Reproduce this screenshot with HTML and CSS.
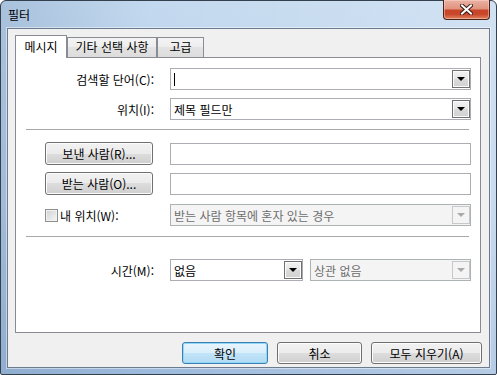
FILE: index.html
```html
<!DOCTYPE html>
<html lang="ko">
<head>
    <meta charset="UTF-8">
    <title>필터</title>
    <link rel="stylesheet" href="styles.css">
</head>
<body>
<div class="window">
    <div class="titlebar">
        <span class="title">필터</span>
        <div class="close">
            <svg width="13" height="11" viewBox="0 0 13 11">
                <path d="M2 1.5 L11 9.5 M11 1.5 L2 9.5" stroke="#3b1d16" stroke-width="4" stroke-linecap="square"/>
                <path d="M2 1.5 L11 9.5 M11 1.5 L2 9.5" stroke="#fff" stroke-width="2" stroke-linecap="square"/>
            </svg>
        </div>
    </div>
    <div class="client">
        <div class="tabs">
            <div class="tab on">메시지</div>
            <div class="tab t2">기타 선택 사항</div>
            <div class="tab t3">고급</div>
        </div>
        <div class="panel">
            <div class="row r1">
                <div class="lbl">검색할 단어(C):</div>
                <div class="combo full"><span class="caret"></span><span class="value"></span><span class="drop"></span></div>
            </div>
            <div class="row r2">
                <div class="lbl">위치(I):</div>
                <div class="combo full"><span class="value">제목 필드만</span><span class="drop"></span></div>
            </div>
            <div class="sep s1"></div>
            <div class="row r3">
                <div class="slot"><button class="btn side">보낸 사람(R)...</button></div>
                <div class="field"></div>
            </div>
            <div class="row r4">
                <div class="slot"><button class="btn side">받는 사람(O)...</button></div>
                <div class="field"></div>
            </div>
            <div class="row r5">
                <div class="slot"><span class="check"></span><span class="check-text">내 위치(W):</span></div>
                <div class="combo full off"><span class="value">받는 사람 항목에 혼자 있는 경우</span><span class="drop"></span></div>
            </div>
            <div class="sep s2"></div>
            <div class="row r6">
                <div class="lbl">시간(M):</div>
                <div class="combo short"><span class="value">없음</span><span class="drop"></span></div>
                <div class="combo rest off"><span class="value">상관 없음</span><span class="drop"></span></div>
            </div>
        </div>
        <div class="actions">
            <button class="btn act default">확인</button>
            <button class="btn act">취소</button>
            <button class="btn act wide">모두 지우기(A)</button>
        </div>
    </div>
</div>
</body>
</html>
```

FILE: styles.css
```css
*{margin:0;padding:0;box-sizing:border-box;}
body{width:497px;height:375px;overflow:hidden;background:#fff;
    font-family:"Noto Sans CJK KR","Malgun Gothic",sans-serif;font-size:12px;color:#000;}

/* window frame */
.window{width:497px;height:375px;border:1px solid #34404e;border-radius:6px 6px 2px 2px;
    padding:0 6px 6px 6px;display:flex;flex-direction:column;
    background:linear-gradient(to right,rgba(120,150,185,.35),rgba(255,255,255,0) 30%,rgba(255,255,255,.25)),
               linear-gradient(to bottom,#c3d9ef 0%,#b6cee8 55%,#9dbadc 100%);}
.titlebar{height:27px;display:flex;align-items:flex-start;}
.title{padding:6px 0 0 1px;line-height:16px;}
.close{margin-left:auto;margin-top:-1px;width:47px;height:20px;border:1px solid #4a2218;border-top:0;
    border-radius:0 0 4px 4px;display:flex;align-items:center;justify-content:center;
    background:linear-gradient(#eab2a4 0%,#e1947f 45%,#c8452a 55%,#c9462b 75%,#e0835f 100%);
    box-shadow:inset 0 0 0 1px rgba(255,220,210,.45);}

.client{flex:1;border:1px solid #6c7c8e;background:#f0f0f0;padding:6px 8px 0 7px;
    display:flex;flex-direction:column;box-shadow:0 0 0 1px rgba(255,255,255,.45);}

/* tabs */
.tabs{height:22px;display:flex;align-items:flex-end;}
.tab{height:20px;border:1px solid #898c95;border-bottom:0;line-height:18px;text-align:center;
    background:linear-gradient(#f4f4f4,#ededed 50%,#e3e3e3 50%,#dcdcdc);}
.tab.on{width:52px;height:23px;line-height:20px;padding-top:1px;background:#fff;margin-bottom:-1px;position:relative;z-index:1;}
.tab.t2{width:90px;}
.tab.t3{width:47px;}

.panel{height:276px;border:1px solid #898c95;background:#fff;display:flex;flex-direction:column;}

.row{display:flex;align-items:center;}
.r1{margin-top:10px;}
.r2{margin-top:8px;}
.r3{margin-top:12px;}
.r4{margin-top:7px;}
.r5{margin-top:9px;}
.r6{margin-top:22px;}
.lbl{width:138px;text-align:right;}
.slot{width:138px;display:flex;align-items:center;}

.sep{height:1px;width:443px;margin-left:10px;background:#a8a8a8;}
.s1{margin-top:9px;}
.s2{margin-top:10px;}

/* combo boxes and text fields */
.combo{height:22px;margin-left:16px;border:1px solid #abadb3;background:#fff;
    display:flex;align-items:center;padding-left:3px;}
.combo.full{width:301px;}
.combo.short{width:133px;}
.combo.rest{width:161px;margin-left:7px;}
.combo .value{flex:1;white-space:nowrap;overflow:hidden;}
.caret{width:1px;height:13px;background:#000;}
.drop{width:18px;height:18px;border:1px solid #707070;display:flex;align-items:center;justify-content:center;
    background:linear-gradient(#f2f2f2,#e6e6e6 50%,#dadada 50%,#d2d2d2);box-shadow:inset 0 0 0 1px #fbfbfb;}
.drop::after{content:"";border-left:4px solid transparent;border-right:4px solid transparent;border-top:4px solid #000;}
.combo.off{background:#f4f4f4;border-color:#adb2b5;color:#6d6d6d;}
.combo.off .drop{border-color:#c6c9cc;background:#f4f4f4;box-shadow:none;}
.combo.off .drop::after{border-top-color:#a9a9a9;}

.field{width:301px;height:22px;margin-left:16px;border:1px solid #abadb3;background:#fff;}

/* buttons */
.btn{font:inherit;color:#000;border:1px solid #707070;border-radius:3px;
    background:linear-gradient(#f2f2f2,#ebebeb 50%,#dddddd 50%,#cfcfcf);box-shadow:inset 0 0 0 1px #fcfcfc;}
.btn.side{width:108px;height:23px;margin-left:29px;}
.btn.default{border-color:#3c7fb1;background:linear-gradient(#e8f5fd,#d9eefb 50%,#c3e4f8 50%,#b1dbf4);
    box-shadow:inset 0 0 0 1px #8fd8f7;}

.check{width:13px;height:13px;margin-left:29px;border:1px solid #8e8f8f;
    background:linear-gradient(135deg,#cfd1d3,#f6f6f6);box-shadow:inset 0 0 0 1px #f1f1f1;}
.check-text{margin-left:2px;}

.actions{display:flex;justify-content:flex-end;gap:9px;margin-top:9px;margin-right:-1px;}
.btn.act{width:85px;height:22px;}
.btn.act.default{width:86px;}
.btn.act.wide{width:111px;}
```
